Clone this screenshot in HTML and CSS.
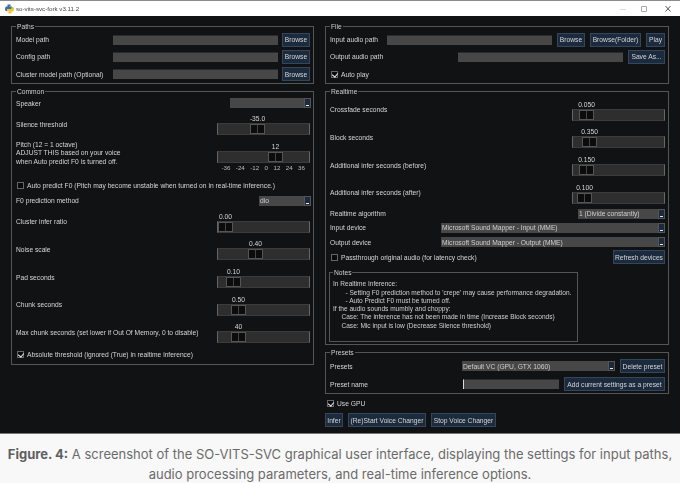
FILE: index.html
```html
<!DOCTYPE html>
<html lang="en">
<head>
    <meta charset="UTF-8">
    <title>so-vits-svc-fork v3.11.2</title>
    <link rel="stylesheet" href="styles.css">
</head>
<body>
<div class="window">
    <div class="titlebar">
        <svg class="pyicon" width="9" height="10" viewBox="0 0 9 10"><path d="M2.500 0.500h3v1.500H4.500v0.500h2.500V5H3.500q-1 0-1 1v1H1Q0 7 0 5t1-2.500h1.500z" fill="#3b6ea5"/><path d="M6.500 9.500h-3V8h1v-.5H2V5h3.500q1 0 1-1V3H8q1 0 1 2t-1 2.500H6.500z" fill="#e8c53a"/></svg>
        <span class="title">so-vits-svc-fork v3.11.2</span>
        <svg class="winbtn" width="60" height="10" viewBox="0 0 60 10"><path d="M3 5.500h6" stroke="#ddd"/><path d="M24.500 2.500h5v5h-5z" stroke="#aaa" fill="none"/><path d="M48.500 2l5 5.500m0-5.500l-5 5.500" stroke="#555" fill="none"/></svg>
    </div>
    <div class="body">
        <div class="col col-left">
            <fieldset class="frame paths">
                <legend>Paths</legend>
                <div class="row r17"><span class="lbl">Model path</span><input class="field w165"><button class="bw28">Browse</button></div>
                <div class="row r17"><span class="lbl">Config path</span><input class="field w165"><button class="bw28">Browse</button></div>
                <div class="row r17"><span class="lbl">Cluster model path (Optional)</span><input class="field w165"><button class="bw28">Browse</button></div>
            </fieldset>
            <fieldset class="frame common">
                <legend>Common</legend>
                <div class="row r15"><span class="lbl">Speaker</span><div class="combo w81"><span class="combo-text"></span><i class="arrow"></i></div></div>
                <div class="row r28"><span class="lbl">Silence threshold</span><div class="slider"><span class="val" style="margin-left:33px">-35.0</span><div class="track"><i class="thumb" style="margin-left:32px"></i></div></div></div>
                <div class="row pitch">
                    <span class="lbl multi">Pitch (12 = 1 octave)<br>ADJUST THIS based on your voice<br>when Auto predict F0 is turned off.</span>
                    <div class="slider"><span class="val" style="margin-left:51px">12</span><div class="track"><i class="thumb" style="margin-left:50px"></i></div>
                        <div class="ticks"><span>-36</span><span>-24</span><span>-12</span><span>0</span><span>12</span><span>24</span><span>36</span></div>
                    </div>
                </div>
                <div class="row r17 check-row"><i class="check"></i><span class="lbl">Auto predict F0 (Pitch may become unstable when turned on in real-time inference.)</span></div>
                <div class="row r14"><span class="lbl">F0 prediction method</span><div class="combo w52"><span class="combo-text">dio</span><i class="arrow"></i></div></div>
                <div class="row r28"><span class="lbl">Cluster infer ratio</span><div class="slider"><span class="val" style="margin-left:1px">0.00</span><div class="track"><i class="thumb" style="margin-left:0"></i></div></div></div>
                <div class="row r28"><span class="lbl">Noise scale</span><div class="slider"><span class="val" style="margin-left:31px">0.40</span><div class="track"><i class="thumb" style="margin-left:30px"></i></div></div></div>
                <div class="row r28"><span class="lbl">Pad seconds</span><div class="slider"><span class="val" style="margin-left:9px">0.10</span><div class="track"><i class="thumb" style="margin-left:8px"></i></div></div></div>
                <div class="row r28"><span class="lbl">Chunk seconds</span><div class="slider"><span class="val" style="margin-left:14px">0.50</span><div class="track"><i class="thumb" style="margin-left:13px"></i></div></div></div>
                <div class="row r28"><span class="lbl">Max chunk seconds (set lower if Out Of Memory, 0 to disable)</span><div class="slider"><span class="val" style="margin-left:14px">40</span><div class="track"><i class="thumb" style="margin-left:13px"></i></div></div></div>
                <div class="row r17 check-row"><i class="check on"></i><span class="lbl">Absolute threshold (ignored (True) in realtime inference)</span></div>
            </fieldset>
        </div>
        <div class="col col-right">
            <fieldset class="frame file">
                <legend>File</legend>
                <div class="row r17"><span class="lbl">Input audio path</span><input class="field w165"><button class="gap bw28">Browse</button><button class="gap bw51">Browse(Folder)</button><button class="gap bw19">Play</button></div>
                <div class="row r17"><span class="lbl">Output audio path</span><input class="field w165"><button class="gap bw37">Save As...</button></div>
                <div class="row r17 check-row"><i class="check on"></i><span class="lbl">Auto play</span></div>
            </fieldset>
            <fieldset class="frame realtime">
                <legend>Realtime</legend>
                <div class="row r28"><span class="lbl">Crossfade seconds</span><div class="slider"><span class="val" style="margin-left:7px">0.050</span><div class="track"><i class="thumb" style="margin-left:6px"></i></div></div></div>
                <div class="row r28"><span class="lbl">Block seconds</span><div class="slider"><span class="val" style="margin-left:10px">0.350</span><div class="track"><i class="thumb" style="margin-left:9px"></i></div></div></div>
                <div class="row r28"><span class="lbl">Additional infer seconds (before)</span><div class="slider"><span class="val" style="margin-left:7px">0.150</span><div class="track"><i class="thumb" style="margin-left:6px"></i></div></div></div>
                <div class="row r28"><span class="lbl">Additional infer seconds (after)</span><div class="slider"><span class="val" style="margin-left:5px">0.100</span><div class="track"><i class="thumb" style="margin-left:4px"></i></div></div></div>
                <div class="row r14"><span class="lbl">Realtime algorithm</span><div class="combo w87"><span class="combo-text">1 (Divide constantly)</span><i class="arrow"></i></div></div>
                <div class="row r14"><span class="lbl">Input device</span><div class="combo w224"><span class="combo-text">Microsoft Sound Mapper - Input (MME)</span><i class="arrow"></i></div></div>
                <div class="row r15"><span class="lbl">Output device</span><div class="combo w224"><span class="combo-text">Microsoft Sound Mapper - Output (MME)</span><i class="arrow"></i></div></div>
                <div class="row r16 check-row"><i class="check"></i><span class="lbl">Passthrough original audio (for latency check)</span><button class="bw52">Refresh devices</button></div>
                <fieldset class="frame notes">
                    <legend>Notes</legend>
                    <p class="note">In Realtime Inference:</p>
                    <p class="note in2">- Setting F0 prediction method to 'crepe' may cause performance degradation.</p>
                    <p class="note in2">- Auto Predict F0 must be turned off.</p>
                    <p class="note">If the audio sounds mumbly and choppy:</p>
                    <p class="note in1">Case: The inference has not been made in time (Increase Block seconds)</p>
                    <p class="note in1">Case: Mic input is low (Decrease Silence threshold)</p>
                </fieldset>
            </fieldset>
            <fieldset class="frame presets">
                <legend>Presets</legend>
                <div class="row r18"><span class="lbl">Presets</span><div class="combo w153"><span class="combo-text">Default VC (GPU, GTX 1060)</span><i class="arrow"></i></div><button class="gap bw45">Delete preset</button></div>
                <div class="row r18"><span class="lbl">Preset name</span><input class="field w96 caret"><button class="gap bw101">Add current settings as a preset</button></div>
            </fieldset>
            <div class="row gpu check-row"><i class="check on"></i><span class="lbl">Use GPU</span></div>
            <div class="actions"><button class="bw18">Infer</button><button class="bw78">(Re)Start Voice Changer</button><button class="bw65">Stop Voice Changer</button></div>
        </div>
    </div>
    <p class="caption"><b>Figure. 4:</b> A screenshot of the SO-VITS-SVC graphical user interface, displaying the settings for input paths, audio processing parameters, and real-time inference options.</p>
</div>
</body>
</html>
```

FILE: styles.css
```css
*{margin: 0;padding: 0;box-sizing: border-box;}
html,body{width: 680px;height: 483px;overflow: hidden;background: #f8f8f8;}
body{font-family: "Liberation Sans", Arial, sans-serif;}
.window{width: 680px;height: 483px;}

.titlebar{height: 16px;background: #fff;border-top: 1px solid #8c8c8c;display: flex;align-items: center;padding-left: 5px;filter: blur(.3px);}
.pyicon{flex: none;}
.title{margin-left: 2px;font-size: 6.200px;color: #444;}
.winbtn{margin-left: auto;margin-right: 3px;}

.body{height: 418px;background: #111213;border-bottom: 1px solid #777;display: flex;padding: 6px 11px 0;color: #d6d6d6;font-size: 6.700px;filter: blur(.3px);}
.col{display: flex;flex-direction: column;}
.col-left{width: 303px;margin-right: 11px;}
.col-right{width: 344px;}

.frame{border: 1px solid #555;padding: 0 3px 0 4px;min-width: 0;}
.frame legend{font-size: 6.700px;line-height: 9px;padding: 0 1px;margin-left: 0;color: #cfcfcf;}
.paths{height: 62px;}
.common{height: 278px;margin-top: 3px;}
.file{height: 62px;}
.realtime{height: 258px;margin-top: 3px;}
.presets{height: 46px;margin-top: 3px;}
.notes{width: 249px;height: 74px;margin: 3px 0 0 -1px;padding: 3px 3px 0;}

.row{display: flex;align-items: center;white-space: nowrap;}
.r14{height: 14px;}
.r15{height: 14.600px;}
.r16{height: 16px;}
.r17{height: 17.300px;}
.r18{height: 18px;}
.r28{height: 27.700px;}
.lbl{margin-right: auto;}
.pitch{height: 38.300px;align-items: flex-start;}
.multi{line-height: 8.200px;margin-top: 3px;}

.field{height: 10px;background: #474747;border: 0;border-top: 1px solid #2b2b2b;display: block;flex: none;}
.w165{width: 165px;}
.w96{width: 96px;}
.caret{border-left: 1px solid #ddd;}

button{font-family: inherit;font-size: 6.700px;color: #d6d6d6;background: #1b2a3d;border: 1px solid #34465c;height: 14px;padding: 0;margin-left: 4px;white-space: nowrap;flex: none;}
button.gap{margin-left: 5px;}
.bw18{width: 18px;}
.bw19{width: 19px;}
.bw28{width: 28px;}
.bw37{width: 37px;}
.bw45{width: 45px;}
.bw51{width: 51px;}
.bw52{width: 52px;}
.bw65{width: 65px;}
.bw78{width: 78px;}
.bw101{width: 101px;}

.combo{height: 10px;background: #474747;display: flex;justify-content: space-between;align-items: center;padding-left: 1px;flex: none;}
.common .combo{margin-right: -1px;}
.w81{width: 81px;}
.w52{width: 52px;}
.w87{width: 87px;}
.w224{width: 224px;}
.w153{width: 153px;}
.combo-text{font-size: 6.700px;color: #cfcfcf;}
.arrow{width: 7px;height: 10px;background: #1b2a3d;border: 1px solid #555;position: relative;display: block;}
.arrow::after{content: "";position: absolute;left: 1px;bottom: 1px;width: 3px;height: 1px;background: #eee;}

.slider{width: 93px;align-self: flex-end;margin-bottom: 3px;flex: none;}
.val{display: flex;justify-content: center;width: 15px;line-height: 8px;height: 8px;font-size: 6.700px;}
.track{height: 12px;background: #2e2e2e;border-left: 1px solid #666;border-right: 1px solid #666;border-top: 1px solid #3c3c3c;border-bottom: 1px solid #3c3c3c;display: flex;}
.thumb{display: block;width: 15px;height: 10px;background: linear-gradient(90deg,#0c0c0c 45%,#444 45%,#444 52%,#0c0c0c 52%);border: 1px solid #555;}
.pitch .slider{align-self: flex-start;margin: 5px 0 0;}
.ticks{display: flex;justify-content: space-between;padding: 0 5px 0 4.500px;line-height: 8px;margin-top: 1px;font-size: 6.200px;color: #bdbdbd;}

.check-row{padding-left: 1px;}
.check{display: block;flex: none;width: 7px;height: 7px;background: #0a0a0a;border: 1px solid #666;margin-right: 3px;position: relative;}
.check.on::after{content: "";position: absolute;left: 1px;top: 0;width: 3px;height: 4px;border-right: 1px solid #eee;border-bottom: 1px solid #eee;transform: rotate(40deg);}

.note{font-size: 6.550px;line-height: 8.250px;color: #d0d0d0;white-space: nowrap;}
.in1{padding-left: 8.500px;}
.in2{padding-left: 12.500px;}

.gpu{height: 19px;padding-left: 2px;}
.actions{display: flex;gap: 5px;}
.actions button{margin: 0;}

.caption{width: 680px;padding: 10px 6px 0;text-align: center;font-family: Inter, "Liberation Sans", sans-serif;font-size: 13px;line-height: 20px;color: #6b6b6b;}
.caption b{font-weight: 700;color: #5f5f5f;}
```
